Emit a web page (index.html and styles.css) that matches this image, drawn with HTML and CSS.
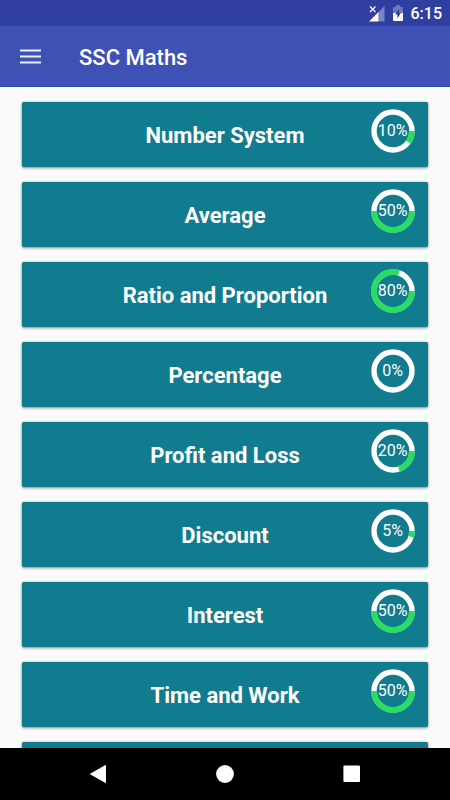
FILE: index.html
```
<!DOCTYPE html>
<html lang="en">
<head>
  <meta charset="UTF-8">
  <meta name="viewport" content="width=device-width, initial-scale=1.0">
  <title>SSC Maths</title>
  <link rel="stylesheet" href="styles.css">
</head>
<body>
  <div class="status-bar">
    <svg class="signal" width="16" height="17" viewBox="0 0 16 17">
      <path d="M15.5 1V16.5H9.5V7z" fill="#7d86c4"/>
      <path d="M9.5 7V16.5H0L8 8.5z" fill="#fff"/>
      <path d="M1 1.5L6.5 7M6.5 1.5L1 7" stroke="#fff" stroke-width="1.2"/>
    </svg>
    <svg class="battery" width="10" height="16" viewBox="0 0 10 16">
      <path d="M3 0H7V2H9Q10 2 10 3V8H0V3Q0 2 1 2H3z" fill="#6e78bd"/>
      <path d="M0 8H10V15Q10 16 9 16H1Q0 16 0 15z" fill="#fff"/>
      <path d="M6 4L2.3 9.5H4.4V13.5L7.9 8H6z" fill="#303f9f"/>
    </svg>
    <span class="clock">6:15</span>
  </div>

  <header class="app-bar">
    <svg class="menu" width="21" height="15" viewBox="0 0 21 15">
      <path d="M0 1.5H21M0 7.5H21M0 13.5H21" stroke="#e8f0fc" stroke-width="2.2"/>
    </svg>
    <h1>SSC Maths</h1>
  </header>

  <main class="list">
    <div class="card">
      <h2>Number System</h2>
      <div class="progress">
        <svg viewBox="0 0 44 44"><circle class="track" cx="22" cy="22" r="19"/><circle class="value" cx="22" cy="22" r="19" pathLength="100" stroke-dasharray="10 100"/></svg>
        <span>10%</span>
      </div>
    </div>
    <div class="card">
      <h2>Average</h2>
      <div class="progress">
        <svg viewBox="0 0 44 44"><circle class="track" cx="22" cy="22" r="19"/><circle class="value" cx="22" cy="22" r="19" pathLength="100" stroke-dasharray="50 100"/></svg>
        <span>50%</span>
      </div>
    </div>
    <div class="card">
      <h2>Ratio and Proportion</h2>
      <div class="progress">
        <svg viewBox="0 0 44 44"><circle class="track" cx="22" cy="22" r="19"/><circle class="value" cx="22" cy="22" r="19" pathLength="100" stroke-dasharray="80 100"/></svg>
        <span>80%</span>
      </div>
    </div>
    <div class="card">
      <h2>Percentage</h2>
      <div class="progress">
        <svg viewBox="0 0 44 44"><circle class="track" cx="22" cy="22" r="19"/></svg>
        <span>0%</span>
      </div>
    </div>
    <div class="card">
      <h2>Profit and Loss</h2>
      <div class="progress">
        <svg viewBox="0 0 44 44"><circle class="track" cx="22" cy="22" r="19"/><circle class="value" cx="22" cy="22" r="19" pathLength="100" stroke-dasharray="20 100"/></svg>
        <span>20%</span>
      </div>
    </div>
    <div class="card">
      <h2>Discount</h2>
      <div class="progress">
        <svg viewBox="0 0 44 44"><circle class="track" cx="22" cy="22" r="19"/><circle class="value" cx="22" cy="22" r="19" pathLength="100" stroke-dasharray="5 100"/></svg>
        <span>5%</span>
      </div>
    </div>
    <div class="card">
      <h2>Interest</h2>
      <div class="progress">
        <svg viewBox="0 0 44 44"><circle class="track" cx="22" cy="22" r="19"/><circle class="value" cx="22" cy="22" r="19" pathLength="100" stroke-dasharray="50 100"/></svg>
        <span>50%</span>
      </div>
    </div>
    <div class="card">
      <h2>Time and Work</h2>
      <div class="progress">
        <svg viewBox="0 0 44 44"><circle class="track" cx="22" cy="22" r="19"/><circle class="value" cx="22" cy="22" r="19" pathLength="100" stroke-dasharray="50 100"/></svg>
        <span>50%</span>
      </div>
    </div>
    <div class="card"></div>
  </main>

  <nav class="nav-bar">
    <svg width="18" height="18" viewBox="0 0 18 18"><path d="M16.5 .5V17.5L1.5 9z" fill="#fff" stroke="#fff" stroke-linejoin="round"/></svg>
    <svg width="18" height="18" viewBox="0 0 18 18"><circle cx="9" cy="9" r="8.9" fill="#fff"/></svg>
    <svg width="18" height="18" viewBox="0 0 18 18"><rect x=".4" y=".4" width="16.6" height="16.6" rx="1" fill="#fff"/></svg>
  </nav>
</body>
</html>
```

FILE: styles.css
```
* {
  box-sizing: border-box;
}
body {
  font-family: Roboto, sans-serif;
  background-color: #fafafa;
  color: #fff;
  margin: 0;
  height: 100vh;
  display: flex;
  flex-direction: column;
  overflow: hidden;
}
.status-bar {
  flex: 0 0 26px;
  display: flex;
  align-items: center;
  justify-content: flex-end;
  padding-right: 8px;
  background-color: #303f9f;
}
.signal {
  margin-right: 8px;
}
.battery {
  margin-right: 8px;
}
.clock {
  font-size: 16px;
  font-weight: 500;
  line-height: 20px;
  padding-top: 2px;
}
.app-bar {
  flex: 0 0 61px;
  display: flex;
  align-items: center;
  padding-left: 20px;
  background-color: #3f51b5;
  border-bottom: 1px solid #2547b4;
}
.app-bar h1 {
  margin: 2px 0 0 38px;
  font-size: 22px;
  font-weight: 500;
}
.list {
  flex: 1;
  min-height: 0;
  overflow: hidden;
  display: flex;
  flex-direction: column;
  gap: 15px;
  padding: 15px 22px 0;
}
.card {
  flex: 0 0 65px;
  display: grid;
  align-items: center;
  background-color: #117b8f;
  border-radius: 2px;
  box-shadow: 0 0 1px rgba(0, 0, 0, 0.4), 0 1px 3px rgba(0, 0, 0, 0.45);
}
.card h2 {
  grid-area: 1 / 1;
  margin: 2px 0 0;
  font-size: 22px;
  font-weight: 700;
  text-align: center;
}
.progress {
  grid-area: 1 / 1;
  justify-self: end;
  align-self: start;
  display: grid;
  place-items: center;
  width: 44px;
  height: 44px;
  margin: 7px 13.5px 0 0;
  font-size: 16px;
}
.progress svg, .progress span {
  grid-area: 1 / 1;
}
.progress span {
  padding-bottom: 1px;
}
.progress svg {
  width: 44px;
  height: 44px;
}
.track, .value {
  fill: none;
  stroke: #fff;
  stroke-width: 5.4;
}
.value {
  stroke: #2bdc64;
  stroke-width: 6;
}
.nav-bar {
  flex: 0 0 52px;
  display: flex;
  align-items: center;
  justify-content: space-between;
  padding: 0 89px;
  background-color: #000;
}
```
